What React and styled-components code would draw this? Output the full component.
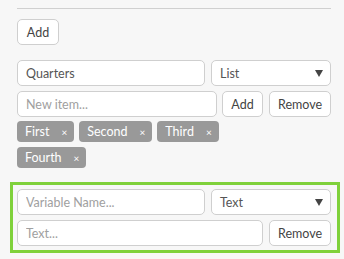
import React from "react";
import styled, { createGlobalStyle } from "styled-components";

const Global = createGlobalStyle`
  html, body { margin: 0; padding: 0; background: #f7f7f7; }
  body { font-family: Lato, "Open Sans", sans-serif; font-size: 12.5px; color: #444; }
  * { box-sizing: border-box; }
`;

const Page = styled.div`
  width: 344px;
  height: 259px;
  padding: 8px 13px 0 17px;
  display: flex;
  flex-direction: column;
  overflow: hidden;
`;

const Divider = styled.div`
  border-top: 1px solid #d0d0d0;
  height: 1px;
`;

const Button = styled.button`
  height: 26px;
  padding: 0 ${(p) => p.$px ?? 10}px;
  border: 1px solid #cfcfcf;
  border-radius: 5px;
  background: #fff;
  font-family: inherit;
  font-size: 12.5px;
  color: #444;
  flex: none;
  ${(p) => p.$w && `width: ${p.$w}px;`}
`;

const TopAdd = styled(Button)`
  margin-top: 10px;
  align-self: flex-start;
  width: 42px;
  padding: 0;
`;

const Section = styled.div`
  margin-top: 15px;
  display: flex;
  flex-direction: column;
  gap: 5px;
`;

const Row = styled.div`
  display: flex;
  gap: ${(p) => p.$gap || 6}px;
  align-items: center;
`;

const Input = styled.input`
  flex: 1;
  min-width: 0;
  height: 26px;
  border: 1px solid #cfcfcf;
  border-radius: 5px;
  background: #fff;
  padding: 0 8px;
  font-family: inherit;
  font-size: 12.5px;
  color: #555;
  outline: none;
  &::placeholder { color: #a0a0a0; }
`;

const Select = styled.div`
  width: 120px;
  flex: none;
  height: 26px;
  border: 1px solid #cfcfcf;
  border-radius: 5px;
  background: #fff;
  padding: 0 7px 0 8px;
  display: flex;
  align-items: center;
  justify-content: space-between;
  color: #555;
`;

const Tags = styled.div`
  display: flex;
  flex-wrap: wrap;
  gap: 5px;
  margin-top: -1px;
  width: 212px;
`;

const Tag = styled.span`
  height: 21px;
  padding: 0 7px 0 8px;
  border-radius: 4px;
  background: #999;
  color: #fff;
  display: inline-flex;
  align-items: center;
  font-size: 12.5px;
`;

const Close = styled.span`
  margin-left: 12px;
  font-size: 10px;
`;

const Highlight = styled.div`
  margin: 14px -9px 0 -7px;
  border: 3px solid #7fd13b;
  padding: 4px 6px 4px 4px;
  display: flex;
  flex-direction: column;
  gap: 5px;
`;

const Arrow = () => (
  <svg width="8" height="7" viewBox="0 0 8 7">
    <path d="M0 0 H8 L4 7 Z" fill="#444" />
  </svg>
);

export default function App() {
  return (
    <Page>
      <Global />
      <Divider />
      <TopAdd>Add</TopAdd>
      <Section>
        <Row>
          <Input defaultValue="Quarters" />
          <Select>
            <span>List</span>
            <Arrow />
          </Select>
        </Row>
        <Row $gap={5}>
          <Input placeholder="New item..." />
          <Button $w={41} $px={0}>Add</Button>
          <Button $w={62} $px={0} style={{ marginLeft: 1 }}>Remove</Button>
        </Row>
        <Tags>
          {["First", "Second", "Third", "Fourth"].map((t) => (
            <Tag key={t}>
              {t}
              <Close>×</Close>
            </Tag>
          ))}
        </Tags>
      </Section>
      <Highlight>
        <Row>
          <Input placeholder="Variable Name..." />
          <Select>
            <span>Text</span>
            <Arrow />
          </Select>
        </Row>
        <Row>
          <Input placeholder="Text..." />
          <Button $w={62} $px={0}>Remove</Button>
        </Row>
      </Highlight>
    </Page>
  );
}
